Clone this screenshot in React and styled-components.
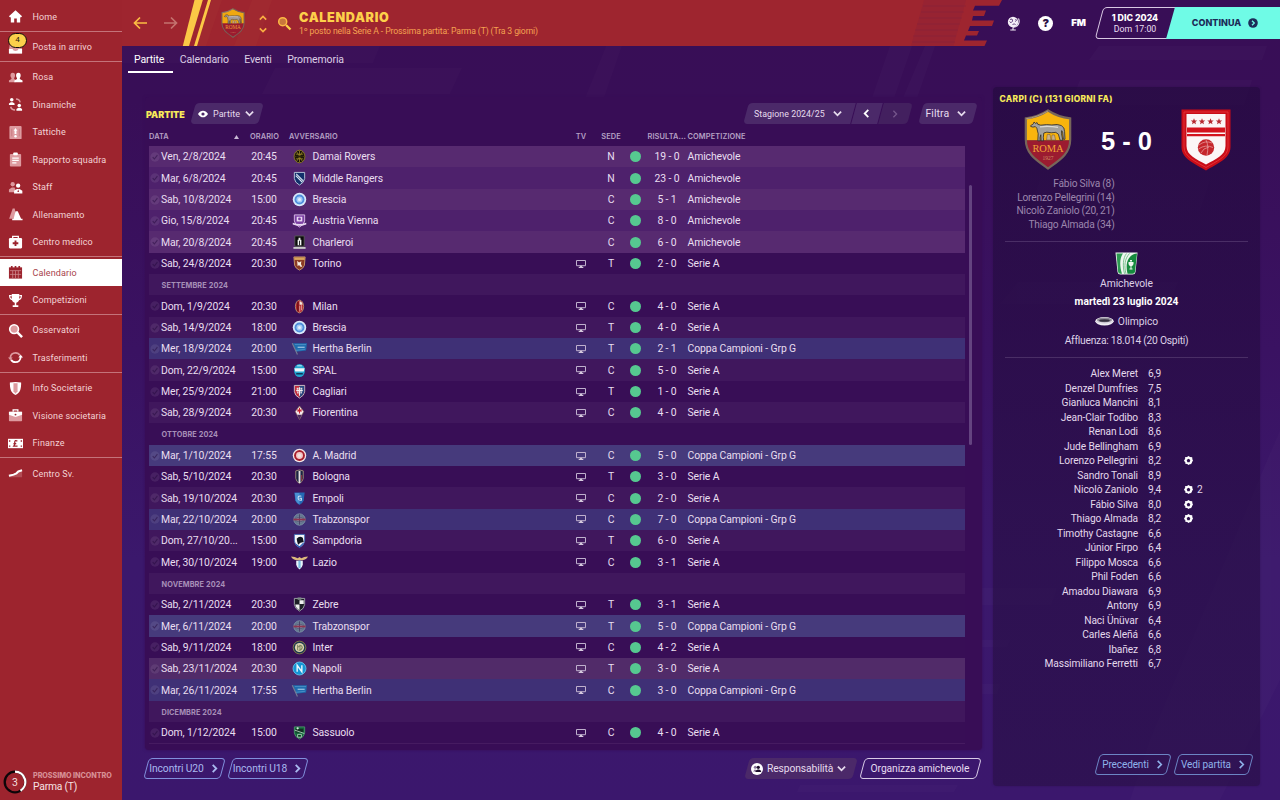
import React from 'react';
import styled, { createGlobalStyle, css } from 'styled-components';

const GlobalStyle = createGlobalStyle`
  * {
    box-sizing: border-box;
  }
  body {
    margin: 0;
    overflow: hidden;
    background: #380f57;
    font-family: Roboto, 'Liberation Sans', sans-serif;
    font-size: 10.5px;
    color: #e9dff0;
  }
  svg {
    display: block;
    flex: none;
  }
`;

const menu = [
  [{ icon: 'home', name: 'Home' }],
  [{ icon: 'inbox', name: 'Posta in arrivo', badge: 4 }],
  [
    { icon: 'squad', name: 'Rosa' },
    { icon: 'dynamics', name: 'Dinamiche' },
    { icon: 'tactics', name: 'Tattiche' },
    { icon: 'report', name: 'Rapporto squadra' },
    { icon: 'staff', name: 'Staff' },
    { icon: 'training', name: 'Allenamento' },
    { icon: 'medical', name: 'Centro medico' },
  ],
  [
    { icon: 'calendar', name: 'Calendario', active: true },
    { icon: 'trophy', name: 'Competizioni' },
  ],
  [
    { icon: 'scout', name: 'Osservatori' },
    { icon: 'transfer', name: 'Trasferimenti' },
  ],
  [
    { icon: 'shield', name: 'Info Societarie' },
    { icon: 'case', name: 'Visione societaria' },
    { icon: 'money', name: 'Finanze' },
  ],
  [{ icon: 'growth', name: 'Centro Sv.' }],
];

const A = 'Amichevole';
const S = 'Serie A';
const C = 'Coppa Campioni - Grp G';

// [date, time, crest, opponent, tv, venue, score, competition, row kind]
const matches = [
  ['Ven, 2/8/2024', '20:45', 'damai', 'Damai Rovers', 0, 'N', '19 - 0', A, 'friendly'],
  ['Mar, 6/8/2024', '20:45', 'middle', 'Middle Rangers', 0, 'N', '23 - 0', A, 'friendly'],
  ['Sab, 10/8/2024', '15:00', 'brescia', 'Brescia', 0, 'C', '5 - 1', A, 'friendly'],
  ['Gio, 15/8/2024', '20:45', 'austria', 'Austria Vienna', 0, 'C', '8 - 0', A, 'friendly'],
  ['Mar, 20/8/2024', '20:45', 'charleroi', 'Charleroi', 0, 'C', '6 - 0', A, 'friendly'],
  ['Sab, 24/8/2024', '20:30', 'torino', 'Torino', 1, 'T', '2 - 0', S, 'league'],
  'SETTEMBRE 2024',
  ['Dom, 1/9/2024', '20:30', 'milan', 'Milan', 1, 'C', '4 - 0', S, 'league'],
  ['Sab, 14/9/2024', '18:00', 'brescia', 'Brescia', 1, 'T', '4 - 0', S, 'league'],
  ['Mer, 18/9/2024', '20:00', 'hertha', 'Hertha Berlin', 1, 'T', '2 - 1', C, 'europe'],
  ['Dom, 22/9/2024', '15:00', 'spal', 'SPAL', 1, 'C', '5 - 0', S, 'league'],
  ['Mer, 25/9/2024', '21:00', 'cagliari', 'Cagliari', 1, 'T', '1 - 0', S, 'league'],
  ['Sab, 28/9/2024', '20:30', 'fiorentina', 'Fiorentina', 1, 'C', '4 - 0', S, 'league'],
  'OTTOBRE 2024',
  ['Mar, 1/10/2024', '17:55', 'madrid', 'A. Madrid', 1, 'C', '5 - 0', C, 'europe'],
  ['Sab, 5/10/2024', '20:30', 'bologna', 'Bologna', 1, 'T', '3 - 0', S, 'league'],
  ['Sab, 19/10/2024', '20:30', 'empoli', 'Empoli', 1, 'C', '2 - 0', S, 'league'],
  ['Mar, 22/10/2024', '20:00', 'trabzon', 'Trabzonspor', 1, 'C', '7 - 0', C, 'europe'],
  ['Dom, 27/10/20...', '15:00', 'sampdoria', 'Sampdoria', 1, 'T', '6 - 0', S, 'league'],
  ['Mer, 30/10/2024', '19:00', 'lazio', 'Lazio', 1, 'C', '3 - 1', S, 'league'],
  'NOVEMBRE 2024',
  ['Sab, 2/11/2024', '20:30', 'zebre', 'Zebre', 1, 'T', '3 - 1', S, 'league'],
  ['Mer, 6/11/2024', '20:00', 'trabzon', 'Trabzonspor', 1, 'T', '5 - 0', C, 'europe'],
  ['Sab, 9/11/2024', '18:00', 'inter', 'Inter', 1, 'C', '4 - 2', S, 'league'],
  ['Sab, 23/11/2024', '20:30', 'napoli', 'Napoli', 1, 'T', '3 - 0', S, 'derby'],
  ['Mar, 26/11/2024', '17:55', 'hertha', 'Hertha Berlin', 1, 'C', '3 - 0', C, 'europe'],
  'DICEMBRE 2024',
  ['Dom, 1/12/2024', '15:00', 'sassuolo', 'Sassuolo', 1, 'C', '4 - 0', S, 'league'],
];

const scorers = ['Fábio Silva (8)', 'Lorenzo Pellegrini (14)', 'Nicolò Zaniolo (20, 21)', 'Thiago Almada (34)'];

const players = [
  ['Alex Meret', '6,9'],
  ['Denzel Dumfries', '7,5'],
  ['Gianluca Mancini', '8,1'],
  ['Jean-Clair Todibo', '8,3'],
  ['Renan Lodi', '8,6'],
  ['Jude Bellingham', '6,9'],
  ['Lorenzo Pellegrini', '8,2', 1],
  ['Sandro Tonali', '8,9'],
  ['Nicolò Zaniolo', '9,4', 2],
  ['Fábio Silva', '8,0', 1],
  ['Thiago Almada', '8,2', 1],
  ['Timothy Castagne', '6,6'],
  ['Júnior Firpo', '6,4'],
  ['Filippo Mosca', '6,6'],
  ['Phil Foden', '6,6'],
  ['Amadou Diawara', '6,9'],
  ['Antony', '6,9'],
  ['Naci Ünüvar', '6,4'],
  ['Carles Aleñá', '6,6'],
  ['Ibañez', '6,8'],
  ['Massimiliano Ferretti', '6,7'],
];

/* ---------- icons ---------- */

const dim = '#dd9a9f';

const menuIcons = {
  home: <path d="M8 1.200 1 7.600l1.300 1.400.7-.6V14.500h3.600V10h2.800v4.500H13V8.400l.7.6L15 7.600z" fill="#fff" />,
  inbox: (
    <>
      <path d="M2 4h12l1 6v4.500H1V10z" fill={dim} />
      <path d="M1 9.500h3.800q.7 2.300 3.200 2.300t3.200-2.300H15v5H1z" fill="#fff" />
    </>
  ),
  squad: (
    <>
      <path d="M5 2.800c2 0 2.600 1.200 2.500 3 0 1.300-.4 2-.9 2.600v1.300l1.400.6V13H1v-1.800l2.700-1.500V8.400C3 7.800 2.600 7 2.600 5.800c0-1.800.7-3 2.400-3z" fill={dim} />
      <path d="M11 2.800c1.900 0 2.600 1.200 2.500 3 0 1.300-.4 2-.9 2.600v1.300l2.900 1.500V13H6.800v-1.800l2.800-1.500V8.400C9 7.800 8.600 7 8.600 5.800c0-1.800.7-3 2.400-3z" fill="#fff" />
    </>
  ),
  dynamics: (
    <>
      <circle cx="4" cy="3" r="1.900" fill="#fff" />
      <path d="M1 8.600V6.800L3 5.500h2l2 1.300v1.800z" fill="#fff" />
      <circle cx="12" cy="9" r="1.900" fill="#fff" />
      <path d="M9 14.600v-1.800l2-1.300h2l2 1.300v1.800z" fill="#fff" />
      <path d="M8.500 2.200c2.500 0 4 1.200 4.400 3.500M7.500 13.800c-2.300 0-4-1-4.600-3.400" fill="none" stroke={dim} strokeWidth="1.600" />
    </>
  ),
  tactics: (
    <>
      <rect x="1.500" y="1" width="13" height="14" rx="1" fill={dim} />
      <path d="M8 3.200 10 6H9v3.500H7V6H6z" fill="#fff" />
      <circle cx="8" cy="12" r="1.300" fill="#fff" />
      <path d="M4 4v8M12 4v8" stroke="#c87b82" />
    </>
  ),
  report: (
    <>
      <rect x="2" y="2" width="12" height="13.500" rx="1" fill={dim} />
      <rect x="5.500" y=".5" width="5" height="3" rx="1" fill="#fff" />
      <path d="M4.500 6.500h7M4.500 9h7M4.500 11.500h4.500" stroke="#fff" strokeWidth="1.300" />
    </>
  ),
  staff: (
    <>
      <circle cx="5" cy="4.500" r="2.300" fill={dim} />
      <path d="M1 13v-3l3-2h3l2 5z" fill={dim} />
      <circle cx="10.800" cy="6" r="2.300" fill="#fff" />
      <path d="M6.500 14.500v-3l3-2h2.800l3 2v3z" fill="#fff" />
      <path d="m10.900 9.800.9 3h-1.800z" fill="#9c242e" />
    </>
  ),
  training: (
    <>
      <path d="M5 1.500h2.200L9 12.500H1.200z" fill={dim} />
      <path d="M8 4.500h2.400L14 12.500h1.500V14h-11v-1.500H6z" fill="#fff" />
    </>
  ),
  medical: (
    <>
      <path d="M5 3.500V1.500h6v2" fill="none" stroke="#fff" strokeWidth="1.400" />
      <rect x="1" y="3.300" width="14" height="11" rx="1.200" fill="#fff" />
      <path d="M8 5.800v6M5 8.800h6" stroke="#9c242e" strokeWidth="2" />
    </>
  ),
  calendar: (
    <>
      <path d="M1 2.500h14V14.500H1z" fill="#9c242e" />
      <path d="M4 1v3.500M12 1v3.500M8 1v3" stroke="#9c242e" strokeWidth="1.800" />
      <path d="M2 6h12M2 10h12M5 6v8M8 6v8M11 6v8" stroke="#cf8c92" strokeWidth=".8" />
    </>
  ),
  trophy: (
    <>
      <path d="M4 1h8v5c0 2.300-1.600 4-3.200 4.300V13H11v2H5v-2h2.200v-2.700C5.600 10 4 8.300 4 6z" fill="#fff" />
      <path d="M4 2.700H1.700C1.700 5.500 3 6.800 4.600 7M12 2.700h2.300c0 2.800-1.300 4.100-2.900 4.300" fill="none" stroke="#fff" strokeWidth="1.300" />
    </>
  ),
  scout: (
    <>
      <path d="m10 10 5 5" stroke="#fff" strokeWidth="2.600" />
      <circle cx="6.500" cy="6.500" r="4.700" fill={dim} stroke="#fff" strokeWidth="1.700" />
    </>
  ),
  transfer: (
    <>
      <path d="M2.500 8.500C2.500 5 5 3 8 3c2.300 0 3.800 1 4.700 2.600" fill="none" stroke={dim} strokeWidth="1.900" />
      <path d="M13.500 7.500C13.500 11 11 13 8 13c-2.300 0-3.800-1-4.700-2.600" fill="none" stroke="#fff" strokeWidth="1.900" />
      <path d="M0 8h5L2.500 11z" fill={dim} />
      <path d="M11 8h5l-2.500-3z" fill="#fff" />
    </>
  ),
  shield: (
    <>
      <path d="M2 1.500q6-1 12 0c0 6-.5 10.500-6 13.500C2.500 12 2 7.500 2 1.500z" fill="#fff" />
      <path d="M5.800 2.500h4.400v8.500L8 13.500 5.800 11z" fill={dim} />
    </>
  ),
  case: (
    <>
      <path d="M5.500 4V2h5v2" fill="none" stroke="#fff" strokeWidth="1.400" />
      <rect x="1" y="4" width="14" height="10" rx=".8" fill={dim} />
      <path d="M1 4h14v3.300L8 9.500 1 7.300z" fill="#fff" />
      <circle cx="8" cy="7" r="1" fill="#9c242e" />
    </>
  ),
  money: (
    <>
      <path d="M0 3h16v10H0z" fill="#fff" />
      <path d="M10 5.500C8.500 4.300 7 5 7.200 6.800c.1 1.500.2 2.600-1 4h4M5.800 8.200h3" fill="none" stroke="#9c242e" strokeWidth="1.400" />
      <path d="M1 4.500h1.500v1.500H1zM13.500 4.500H15v1.500h-1.500zM1 10h1.500v1.500H1zM13.500 10H15v1.500h-1.500z" fill="#9c242e" />
    </>
  ),
  growth: (
    <>
      <path d="M1 12V9.500l4-.7L9 7l6-3v8z" fill={dim} opacity=".35" />
      <path d="M1 10.500 6 9.200 9 7.800l2-2 4-1.200" fill="none" stroke="#fff" strokeWidth="2.200" />
    </>
  ),
};

const MenuIcon = ({ name }) => (
  <svg width="15" height="15" viewBox="0 0 16 16">
    {menuIcons[name]}
  </svg>
);

const Chevron = ({ dir = 'down', size = 8, color = 'currentColor', width = 2 }) => {
  const d = {
    down: 'M1 3l4 4 4-4',
    up: 'M1 7l4-4 4 4',
    left: 'M7 1L3 5l4 4',
    right: 'M3 1l4 4-4 4',
  }[dir];
  return (
    <svg width={size} height={size} viewBox="0 0 10 10">
      <path d={d} fill="none" stroke={color} strokeWidth={width} />
    </svg>
  );
};

const Arrow = ({ flip, color }) => (
  <svg width="14" height="14" viewBox="0 0 14 14">
    <path
      d={flip ? 'M0 7h12.500M7 1.500 12.500 7 7 12.500' : 'M14 7H1.500M7 1.500 1.500 7 7 12.500'}
      fill="none"
      stroke={color}
      strokeWidth="1.700"
    />
  </svg>
);

const Eye = () => (
  <svg width="10" height="8" viewBox="0 0 10 8">
    <path d="M0 4C1.500 1.500 3.200.7 5 .7S8.500 1.500 10 4C8.500 6.500 6.800 7.300 5 7.300S1.500 6.500 0 4z" fill="#fff" />
    <circle cx="5" cy="4" r="1.600" fill="#4b2767" />
  </svg>
);

const Search = () => (
  <svg width="15" height="15" viewBox="0 0 15 15">
    <path d="m9 9 4.500 4.500" stroke="#fdd04a" strokeWidth="2.300" />
    <circle cx="5.700" cy="5.700" r="4" fill="#c9773c" stroke="#fdb944" strokeWidth="1.500" />
  </svg>
);

const Globe = () => (
  <svg width="13" height="15" viewBox="0 0 13 15">
    <circle cx="6" cy="6" r="5.200" fill="#f3edf6" />
    <path d="M3 3.500 5 3l.7 2L4 6.800 2.500 5.500M8.500 3l1 1.500-1.500 1M5.500 8.500l2-.7 1 1.200" fill="none" stroke="#5b3a78" strokeWidth=".9" />
    <path d="M11.500 2.500c1.800 4-.5 8.800-5.500 8.800M6 11.300v2.200M3.300 14h5.500" fill="none" stroke="#f3edf6" strokeWidth="1.100" />
  </svg>
);

const Tv = () => (
  <svg width="10" height="8" viewBox="0 0 10 8">
    <path d="M.5.500h9v5.200h-9z" fill="none" stroke="#bfb0cd" />
    <path d="M2.700 7.400h4.600M4 6.400h2" stroke="#d6cade" strokeWidth="1.100" />
  </svg>
);

const Check = () => (
  <svg width="10" height="10" viewBox="0 0 10 10">
    <circle cx="5" cy="5" r="4.700" fill="#fff" opacity=".08" />
    <path d="M2.700 5.200 4.400 7l3-3.800" fill="none" stroke="#22083c" strokeWidth="1.100" opacity=".5" />
  </svg>
);

const Ball = () => (
  <svg width="9" height="9" viewBox="0 0 9 9">
    <path d="M1 1.300 3 1l1.500-.9L6 1l2.200.3.2 2L9 4.700 8 6l-.3 2-2 .3-1.200.7L3.200 8 1.200 7.800.9 6 0 4.600.9 3.300z" fill="#fff" />
    <path d="m4.500 2.700 1.800 1.400-.7 2.100H3.400l-.7-2.100z" fill="#2d104d" />
    <path d="M0 2.500h1.200M7.500 7l1 1.500M.5 7.500l1.200-.7" stroke="#2d104d" strokeWidth=".7" />
  </svg>
);

const People = () => (
  <svg width="12" height="12" viewBox="0 0 12 12">
    <circle cx="6" cy="6" r="6" fill="#fff" />
    <circle cx="4.300" cy="4.300" r="1.500" fill="#8c7a9d" />
    <path d="M2 8.500 4 6.300l2 2.200z" fill="#8c7a9d" />
    <circle cx="7.300" cy="4.300" r="1.600" fill="#1d0d2c" />
    <path d="M4.500 9V7.800L6.600 6.500h1.500l2 1.300V9z" fill="#1d0d2c" />
  </svg>
);

const Stadium = () => (
  <svg width="19" height="10" viewBox="0 0 19 10">
    <ellipse cx="9.500" cy="5.200" rx="9.200" ry="4.200" fill="#f1eff4" />
    <ellipse cx="9.500" cy="4" rx="7.500" ry="2.600" fill="#8f8b98" />
    <ellipse cx="9.500" cy="4.500" rx="5.300" ry="1.300" fill="#34303e" />
    <path d="M1 5.500q8.500 3.500 17 0" fill="none" stroke="#c9c5d2" strokeWidth=".7" />
  </svg>
);

const CupLogo = () => (
  <svg width="23" height="23" viewBox="0 0 23 23">
    <path d="M.5.500h22L20.500 20q-.3 2.500-3 2.500h-12q-2.700 0-3-2.500z" fill="#eef6ef" />
    <path d="M22 1.500c-9 1-12 10-9.500 20.300h5q2.300 0 2.500-2z" fill="#158a3e" />
    <path d="M1.500 1.500h6.500C4.500 6 4.500 14 7 21.800H5.500q-2.200 0-2.400-2z" fill="#2d9a52" />
    <path d="M11.500 1.500C8 6 7.500 14 9.500 21.800M14.500 1.500C9.500 7 9 14 11 21.800" fill="none" stroke="#6fbb87" strokeWidth=".9" />
    <path d="M13.500 10h5v2q-.5 2-2 2.200v2.300h1v1h-3v-1h1v-2.300q-1.500-.2-2-2.200zM15 8h2v1.500h-2z" fill="#eef6ef" />
  </svg>
);

/* ---------- club crests ---------- */

const shieldPath = 'M2.500 1.500h11v6.500q-.5 4.500-5.500 7-5-2.500-5.500-7z';

const crests = {
  damai: (
    <>
      <ellipse cx="8" cy="8" rx="5.800" ry="6.700" fill="#151208" stroke="#8a7826" />
      <path d="M4 5.500h8M3 8h10M4 10.500h8M8 2v12M5 3l6 10M11 3 5 13" stroke="#a58f2a" strokeWidth=".8" />
      <path d="M3.500 7h9v2h-9z" fill="#2b2408" />
    </>
  ),
  middle: (
    <>
      <path d={shieldPath} fill="#12306b" stroke="#b9c8dc" />
      <path d="m4 5 7 7M4.500 3l7.500 7.500" stroke="#d9e4f2" strokeWidth="1.200" />
    </>
  ),
  brescia: (
    <>
      <circle cx="8" cy="8" r="7.200" fill="#d8e9fb" />
      <circle cx="8" cy="8" r="5.300" fill="#4f8fdc" />
      <circle cx="8" cy="8" r="3.300" fill="#a6ccf5" />
      <circle cx="8" cy="8" r="1.600" fill="#e3effc" />
    </>
  ),
  austria: (
    <>
      <path d="M2.500 2h11v6.500q-.5 4-5.500 6.500-5-2.500-5.500-6.500z" fill="#7a3fa2" stroke="#d9bde8" />
      <path d="M5 4h6v5H5z" fill="#e9d9f2" />
      <circle cx="8" cy="6.300" r="1.500" fill="#7a3fa2" />
      <path d="M.8 10.300q7.200 2.800 14.400 0v2q-7.200 2.800-14.400 0z" fill="#e9d9f2" />
    </>
  ),
  charleroi: (
    <>
      <path d="M3 1h10v11H3z" fill="#0c0c0c" stroke="#5b5b5b" />
      <path d="M6 5h4v6H6zM7 3h2v2H7z" fill="#f4f4f4" />
      <path d="M7.500 6h1v5h-1z" fill="#222" />
      <path d="M1.500 12.800h13v2h-13z" fill="#c9c9c9" />
    </>
  ),
  torino: (
    <>
      <path d="M2 1h12l-.8 9Q12 13.500 8 15 4 13.500 2.800 10z" fill="#8b3a24" stroke="#c79a6b" />
      <path d="M2.500 1.500h11v2.700h-11z" fill="#d8a45c" />
      <path d="m5.500 5 2 2 2.500-1.500-.5 3 1.500 3H9L7.500 9.500 6 11z" fill="#f6ede2" />
    </>
  ),
  milan: (
    <>
      <ellipse cx="8" cy="8" rx="4.400" ry="6.800" fill="#b31f26" stroke="#b9a37c" strokeWidth=".8" />
      <path d="M6.300 3v10" stroke="#3a0a10" strokeWidth=".9" />
      <path d="M8 2.500c2 .3 3 1.500 3.300 3.500H8z" fill="#efe6df" />
      <path d="M8.300 7v6.500M10.300 6.500v5.500" stroke="#efd0cb" strokeWidth=".8" />
    </>
  ),
  hertha: (
    <>
      <path d="M1 2.500h15L15 10 4.500 11.500z" fill="#1f6dae" />
      <path d="M3 3.800h12M3.500 10l10.500-1.200" stroke="#5a9fd0" strokeWidth=".7" />
      <path d="M6 6h7.500v1.500H6z" fill="#8fb9dc" />
      <path d="M.3 2.500 5.800 14.500" stroke="#767d95" strokeWidth="1.200" />
    </>
  ),
  spal: (
    <>
      <ellipse cx="8" cy="8" rx="5.800" ry="7" fill="#23a5cf" />
      <path d="M2.500 5.500h11l-1 3.500h-9z" fill="#f2f7fa" />
      <path d="M4.500 11.500h7" stroke="#0c2f52" strokeWidth="1.500" />
      <path d="M5.500 3h5" stroke="#d4eef7" />
    </>
  ),
  cagliari: (
    <>
      <path d={shieldPath} fill="#c32a3a" stroke="#ccc4cf" />
      <path d="M8 2h5v6q-.5 4-5 6.300z" fill="#27467e" />
      <path d="M8 3.500v9M4.500 7h7" stroke="#f2edf0" strokeWidth="1.200" />
      <path d="M5 4h2v2H5zM9 4h2v2H9zM5.500 8h1.500v2H5.500zM9 8h1.500v2H9z" fill="#e8dfe4" />
    </>
  ),
  fiorentina: (
    <>
      <path d="M8 1 12.500 7 8 15.500 3.500 7z" fill="#f5e9ee" stroke="#8d7654" strokeWidth=".6" />
      <path d="M8 3v6M5.500 6.500h5M6 4.500 8 7l2-2.500" stroke="#c6222f" strokeWidth="1.100" fill="none" />
      <path d="m5.500 10.500 2.500 5 2.500-5z" fill="#4d2a5e" />
    </>
  ),
  madrid: (
    <>
      <circle cx="8" cy="8" r="7.200" fill="#f3e4e6" />
      <circle cx="8" cy="8" r="5.800" fill="#a81d2c" />
      <circle cx="8" cy="8" r="3.700" fill="#f5c7c6" />
      <circle cx="8" cy="8" r="2" fill="#efe0e1" />
    </>
  ),
  bologna: (
    <>
      <path d="M4 2q4-2 8 0v8q-.5 3.500-4 5.500-3.500-2-4-5.500z" fill="#1b2443" stroke="#a5947c" strokeWidth=".9" />
      <path d="M10.300 6.500v6" stroke="#8f3340" strokeWidth="1.200" />
      <path d="M7 2v13h2V2z" fill="#e6e1e3" />
    </>
  ),
  empoli: (
    <>
      <path d="M2.500 1.500h11L12.500 10Q11 13.500 8 15 5 13.500 3.500 10z" fill="#2468b4" />
      <path d="M3 2h5v12Q5 12.500 4 10z" fill="#4a90d2" />
      <path d="M10 5.500q-3.500-.7-3.500 2t3.500 2.300V7.700H8" fill="none" stroke="#cfe3f5" strokeWidth="1.100" />
    </>
  ),
  trabzon: (
    <>
      <circle cx="8" cy="8" r="6" fill="#5c7089" stroke="#8095a8" />
      <path d="M5 4h6v8H5z" fill="#7f94a8" />
      <path d="M8 2.500v11M5 5.500h6M5 10.500h6" stroke="#4a4368" />
      <path d="M1.500 7h13v2h-13z" fill="#8f3350" />
    </>
  ),
  sampdoria: (
    <>
      <path d="M2.500 1.500h11v7q-.5 4.500-5.500 7-5-2.500-5.500-7z" fill="#f4f4f8" stroke="#2c61b5" strokeWidth=".8" />
      <path d="M5 6Q8 2.500 11.500 5l1 4.500-3.500 1-2.500 2L5.500 9z" fill="#111621" />
      <path d="m4 12 4 3 4-4" stroke="#2c61b5" strokeWidth="1.300" fill="none" />
    </>
  ),
  lazio: (
    <>
      <path d="M-1 1.500q4.500 0 7 2l2-1.500 2 1.500q2.500-2 7-2-1.500 3.500-6 4H5Q.5 5 -1 1.500z" fill="#dcb97c" />
      <path d="M4.500 6h7v4.500Q11 13.500 8 15.500q-3-2-3.500-5z" fill="#e9f4fb" />
      <path d="M6.800 6h2.400v8H6.800z" fill="#79bbdf" />
    </>
  ),
  zebre: (
    <>
      <path d={shieldPath} fill="#1d1f26" stroke="#9fa6a8" />
      <path d="M8 3.500h4.500v4H8zM3.500 8H8v6Q4 12 3.500 8z" fill="#eff0f0" />
      <path d="M6 .5h4v2.500H6z" fill="#7c8a86" />
    </>
  ),
  inter: (
    <>
      <circle cx="8" cy="8" r="6.800" fill="#1e3a52" stroke="#837a48" />
      <circle cx="8" cy="8" r="4.900" fill="#dcd4ae" />
      <path d="M6 5v6M8.500 5v6M6 8q4-4 5 0-1 3-4 3" fill="none" stroke="#7f8660" strokeWidth="1.100" />
    </>
  ),
  napoli: (
    <>
      <circle cx="8" cy="8" r="6.900" fill="#1495d3" stroke="#5cbce6" />
      <path d="M5.500 11.500v-7l5 7v-7" fill="none" stroke="#e8f6fd" strokeWidth="1.500" />
    </>
  ),
  sassuolo: (
    <>
      <path d="M2.500 2h11v6.500q-.5 4-5.500 6.500-5-2.500-5.500-6.500z" fill="#12693b" stroke="#4a8f68" />
      <path d="M4 4h8v4H4z" fill="#113022" />
      <path d="M3 5.500 13 9M6 10h4v3H6z" stroke="#b7d9c3" strokeWidth=".9" fill="#0b3a20" />
      <circle cx="6" cy="3.500" r="1.200" fill="#d9ebdf" />
    </>
  ),
};

const Crest = ({ club }) => (
  <svg width="15" height="15" viewBox="0 0 16 16" overflow="visible">
    {crests[club]}
  </svg>
);

const RomaCrest = ({ width, height, faded }) => (
  <svg width={width} height={height} viewBox="0 0 48 60" preserveAspectRatio="none" opacity={faded ? 0.92 : 1}>
    <defs>
      <clipPath id={`roma${width}`}>
        <path d="M24 1.500C17 6 9 8.500 1.800 9.300V30c0 14 10 20 22.200 28.500C36.200 50 46.200 44 46.200 30V9.300C39 8.500 31 6 24 1.500z" />
      </clipPath>
    </defs>
    <g clipPath={`url(#roma${width})`}>
      <path d="M0 0h48v31H0z" fill="#f8b40e" />
      <path d="M0 31h48v29H0z" fill="#9b1b30" />
    </g>
    <path d="M24 1.500C17 6 9 8.500 1.800 9.300V30c0 14 10 20 22.200 28.500C36.200 50 46.200 44 46.200 30V9.300C39 8.500 31 6 24 1.500z" fill="none" stroke="#77665a" strokeWidth="2.200" />
    <path d="M24 2C17 6 9 8.800 2.200 9.600" fill="none" stroke="#b7a693" strokeWidth=".8" />
    {/* the wolf: head and snout to the left, body, four legs, tail */}
    <path
      d="M6.500 16.500 9.500 14.500 10 12.800l1.700 1.500 1.300-1 .8 1.800 3 .8q6-1 11-.2 6-1.300 9.500.6 3.500 1.800 3.300 6l.4 7.500h-1.600l-.8-7-.9-1.500-.2 3 1.300 6.500h-2.700l-1.700-6-2.600-1.800q-4.500.8-9-.2l-3 .8-.5 4.200.3 3.500h-2.500l-.3-6-.8 3 .2 3h-2.400l.4-7-1.400-5.500-1.500-1.500-2.300.5-2.200-.6z"
      fill="#a3a29e"
      stroke="#2e2a27"
      strokeWidth=".8"
    />
    <path d="M16 17.500q9-1 18 .5" fill="none" stroke="#dcdbd6" strokeWidth="1.300" />
    <path d="M23.300 25h2.700l1 5.500h-4.500zM28 25.500h2.500l1 5h-4z" fill="#c9b08a" stroke="#6d532f" strokeWidth=".5" />
    <text x="24" y="42.300" textAnchor="middle" fontFamily="Liberation Serif, serif" fontSize="10.500" fill="#f2a436" textLength="31">
      ROMA
    </text>
    <text x="24" y="50.500" textAnchor="middle" fontFamily="Liberation Serif, serif" fontSize="5.500" fill="#cf8e62">
      1927
    </text>
  </svg>
);

const CarpiCrest = () => (
  <svg width="50" height="62" viewBox="0 0 50 62">
    <path d="M.5.500h49V38c0 12-14 17-24.500 23.500C14.500 55 .5 50 .5 38z" fill="#c90d18" />
    <path d="M3 3h44v35c0 10-12 14.500-22 20.500C15 52.500 3 48 3 38z" fill="none" stroke="#e8383c" strokeWidth=".8" />
    <path d="M5.500 5h39v32c0 9.500-10 13-19.500 18.500C15.500 50 5.500 46.500 5.500 37z" fill="#fbf6f6" />
    {[13, 21, 29.5, 38].map((x) => (
      <path key={x} transform={`translate(${x} 12.500)`} d="M0-3.200.9-1h2.300L1.400.5 2 2.800 0 1.500-2 2.800l.6-2.300L-3.200-1h2.300z" fill="#b62a30" />
    ))}
    <path d="M6 18.500h38v5H6zM6 25h38v2.300H6z" fill="#d3131d" />
    <circle cx="25" cy="38.500" r="8.200" fill="#c5262b" />
    <path d="M18 36q6-5 13-2M17.500 40q7-5 14.500-1.500M20 44q2-5 8-6M25 31q3 6 1 15" fill="none" stroke="#eaa5a5" strokeWidth=".7" />
  </svg>
);

/* ---------- backdrops ---------- */

const Backdrop = () => (
  <Backdrop.Svg width="1280" height="800" viewBox="0 0 1280 800">
    <g fill="#fff" opacity=".014">
      <path d="M275 68h187l-12 26H262zM122 46h258l-7 17H122zM606 46h16l-18 52h-19z" />
      <path d="M890 46h22l-18 52h-22zM925 46h10l-18 52h-14z" />
      <path d="M1099 46h168l-5 14H1089zM1080 80h172l-8 25H1070z" />
      <path d="M1040 180h170l-10 30H1030zM1018 282h160l-9 22H1000zM982 588h75l-6 17h-69z" />
      <path d="M982 640h28l-3 7h-25zM982 684h18l-3 10h-15zM800 785h158l-4 7H797z" />
      <path d="M1280 430v250l-60 120h-90l20-60z" />
    </g>
  </Backdrop.Svg>
);

Backdrop.Svg = styled.svg`
  position: absolute;
  inset: 0;
  z-index: -1;
`;

const HeaderArt = () => (
  <HeaderArt.Svg width="882" height="46" viewBox="122 0 882 46">
    <path
      d="M122 0h880l-3 5.700h-24l-2 4.800h13l-2 5.500h-11l-1 4.500h22l-2 5.500h-22l-2 5h11l-2 4.500h-11l-2 5h23l-2.500 5.500H122z"
      fill="#9e252f"
    />
    <path d="M924 0h42l-12.500 46H911z" fill="#7b1f40" opacity=".2" />
    <path d="M923 6h43M921 12h43M919 18h43M917 24h43M915 30h43M913 36h43M912 42h43" stroke="#6c1c42" opacity=".12" strokeWidth="2" />
    <path d="M212 0h10l-16 46h-10zM252 0h20l-16 46h-22z" fill="#b3473a" opacity=".12" />
    <path d="M194.500 0h8.300L189 46h-6.200z" fill="#fbc846" />
    <path d="M208 0h3l-14 46h-3z" fill="#fbc846" />
  </HeaderArt.Svg>
);

HeaderArt.Svg = styled.svg`
  position: absolute;
  left: 0;
  top: 0;
  z-index: -1;
`;

/* ---------- components ---------- */

const Sidebar = () => (
  <Sidebar.Wrapper>
    {menu.map((group) => (
      <Sidebar.Group key={group[0].name}>
        {group.map((item) => (
          <Sidebar.Item key={item.name} $active={item.active}>
            <Sidebar.Icon>
              <MenuIcon name={item.icon} />
              {item.badge && <Sidebar.Badge>{item.badge}</Sidebar.Badge>}
            </Sidebar.Icon>
            {item.name}
          </Sidebar.Item>
        ))}
      </Sidebar.Group>
    ))}
    <Sidebar.Next>
      <svg width="24" height="24" viewBox="0 0 24 24">
        <circle cx="12" cy="12" r="10.300" fill="none" stroke="#0d0508" strokeWidth="2.300" />
        <path d="M12 1.700a10.300 10.300 0 0 1 5.500 19" fill="none" stroke="#fff" strokeWidth="2.300" />
        <text x="12" y="15.800" textAnchor="middle" fontSize="10.500" fill="#f3dedf">3</text>
      </svg>
      <div>
        <Sidebar.NextLabel>PROSSIMO INCONTRO</Sidebar.NextLabel>
        <Sidebar.NextTeam>Parma (T)</Sidebar.NextTeam>
      </div>
    </Sidebar.Next>
  </Sidebar.Wrapper>
);

Sidebar.Wrapper = styled.nav`
  width: 122px;
  height: 800px;
  flex: none;
  display: flex;
  flex-direction: column;
  padding-top: 3px;
  background: #9d242e;
`;

Sidebar.Group = styled.ul`
  list-style: none;
  margin: 0;
  padding: 0;
  & + & {
    border-top: 1px solid #c4737a;
    padding-top: 1.8px;
  }
`;

Sidebar.Item = styled.li`
  height: 27.5px;
  display: flex;
  align-items: center;
  padding-left: 8px;
  gap: 9.5px;
  font-size: 9px;
  letter-spacing: 0.13px;
  color: ${({ $active }) => ($active ? '#a8434b' : '#f3d3d5')};
  background: ${({ $active }) => ($active ? '#fff' : 'transparent')};
`;

Sidebar.Icon = styled.span`
  position: relative;
`;

Sidebar.Badge = styled.span`
  position: absolute;
  left: 0;
  top: -7px;
  width: 19px;
  height: 15px;
  border: 1.5px solid #120b0b;
  border-radius: 8px;
  background: #fbd04b;
  color: #2f200c;
  font-size: 8px;
  line-height: 12px;
  text-align: center;
`;

Sidebar.Next = styled.div`
  margin-top: auto;
  height: 37px;
  display: flex;
  align-items: center;
  gap: 6px;
  padding-left: 3px;
`;

Sidebar.NextLabel = styled.div`
  font: 800 7.2px/11px Inter, sans-serif;
  letter-spacing: -0.05px;
  color: #d78f95;
  white-space: nowrap;
`;

Sidebar.NextTeam = styled.div`
  line-height: 12px;
  font-size: 10.3px;
  letter-spacing: -0.2px;
  color: #f6e3e4;
`;

const Header = () => (
  <Header.Wrapper>
    <HeaderArt />
    <Header.Nav>
      <Arrow color="#fbbd43" />
      <Arrow flip color="#c4736f" />
    </Header.Nav>
    <RomaCrest width={24} height={30} faded />
    <Header.Switch>
      <Chevron dir="up" color="#f9ae43" />
      <Chevron dir="down" color="#f9ae43" />
    </Header.Switch>
    <Search />
    <Header.Titles>
      <Header.Title>CALENDARIO</Header.Title>
      <Header.Subtitle>1º posto nella Serie A - Prossima partita: Parma (T) (Tra 3 giorni)</Header.Subtitle>
    </Header.Titles>
    <Header.Tools>
      <Globe />
      <Header.Help>?</Header.Help>
      <Header.Brand>FM</Header.Brand>
    </Header.Tools>
    <Header.Date>
      <b>1 DIC 2024</b>
      <span>Dom 17:00</span>
    </Header.Date>
    <Header.Continue>
      CONTINUA
      <svg width="10" height="10" viewBox="0 0 10 10">
        <circle cx="5" cy="5" r="4.800" fill="#1c2b58" />
        <path d="m4 2.700 2.300 2.300L4 7.300" fill="none" stroke="#6ffbe6" strokeWidth="1.300" />
      </svg>
    </Header.Continue>
  </Header.Wrapper>
);

Header.Wrapper = styled.header`
  position: relative;
  z-index: 0;
  height: 46px;
  flex: none;
  display: flex;
  align-items: center;
  padding-left: 11px;
`;

Header.Nav = styled.div`
  display: flex;
  gap: 17px;
  margin-right: 43px;
`;

Header.Switch = styled.div`
  display: flex;
  flex-direction: column;
  gap: 4px;
  margin: 2px 10px 0 14px;
`;

Header.Titles = styled.div`
  margin-left: 7px;
  padding-top: 1px;
  flex: 1;
`;

Header.Title = styled.h1`
  margin: 0;
  font: 900 12.6px/14px Inter, sans-serif;
  letter-spacing: 0.65px;
  color: #fdd04a;
`;

Header.Subtitle = styled.div`
  font-size: 8.7px;
  line-height: 12px;
  letter-spacing: -0.14px;
  color: #f5a251;
`;

Header.Tools = styled.div`
  display: flex;
  align-items: center;
  gap: 18px;
  margin-right: 10px;
`;

Header.Help = styled.span`
  width: 15px;
  height: 15px;
  border-radius: 50%;
  background: #fff;
  color: #2b1044;
  font: 900 11px/15px Inter, sans-serif;
  text-align: center;
`;

Header.Brand = styled.span`
  font: 900 9.6px/12px Inter, sans-serif;
  color: #fff;
`;

Header.Date = styled.div`
  position: relative;
  width: 70px;
  height: 32px;
  display: flex;
  flex-direction: column;
  align-items: center;
  justify-content: center;
  gap: 1px;
  padding-left: 8px;
  font-size: 8.8px;
  line-height: 10px;
  &::before {
    content: '';
    position: absolute;
    inset: 0 -8px 0 3px;
    border: 1.5px solid #d9c9e3;
    border-radius: 4px;
    transform: skewX(-15deg);
  }
  b {
    font: 800 8.8px/10px Inter, sans-serif;
    color: #fff;
  }
`;

Header.Continue = styled.button`
  position: relative;
  width: 114px;
  height: 32px;
  border: 0;
  display: flex;
  align-items: center;
  justify-content: center;
  gap: 7px;
  padding: 0 0 0 4px;
  background: #6ffbe6;
  clip-path: polygon(9px 0, 100% 0, 100% 100%, 0 100%);
  font: 800 9px/12px Inter, sans-serif;
  color: #1c2b58;
`;

const slanted = css`
  position: relative;
  z-index: 0;
  height: 21px;
  display: flex;
  align-items: center;
  &::before {
    content: '';
    position: absolute;
    z-index: -1;
    inset: 0 2.5px;
    border-radius: 4px;
    transform: skewX(-15deg);
  }
`;

const SoftButton = styled.button`
  ${slanted}
  width: ${({ $width }) => $width}px;
  justify-content: ${({ $center }) => ($center ? 'center' : 'flex-start')};
  gap: ${({ $gap = 6 }) => $gap}px;
  padding: 0 0 0 ${({ $left = 0 }) => $left}px;
  border: 0;
  background: none;
  font-family: inherit;
  font-size: ${({ $size = 9 }) => $size}px;
  letter-spacing: ${({ $spacing = 0.05 }) => $spacing}px;
  color: ${({ $faded }) => ($faded ? '#76568c' : '#e6dbed')};
  &::before {
    background: ${({ $faded }) => ($faded ? '#43205f' : '#4b2969')};
    border-radius: ${({ $radius = '4px' }) => $radius};
  }
`;

const OutlineButton = styled.button`
  ${slanted}
  width: ${({ $width }) => $width}px;
  justify-content: center;
  gap: 6px;
  padding: 0 0 1px;
  border: 0;
  background: none;
  font-family: inherit;
  font-size: ${({ $size = 10.3 }) => $size}px;
  letter-spacing: -0.1px;
  white-space: nowrap;
  color: ${({ $tone }) => $tone};
  &::before {
    border: 1.5px solid ${({ $line }) => $line};
  }
`;

const Tabs = () => (
  <Tabs.List>
    <Tabs.Item $active>Partite</Tabs.Item>
    <Tabs.Item>Calendario</Tabs.Item>
    <Tabs.Item>Eventi</Tabs.Item>
    <Tabs.Item>Promemoria</Tabs.Item>
  </Tabs.List>
);

Tabs.List = styled.div`
  display: flex;
  gap: 0.5px;
  height: 27px;
  padding-left: 6px;
`;

Tabs.Item = styled.a`
  padding: 0 9px 0 6px;
  line-height: 27px;
  letter-spacing: -0.12px;
  font-size: 10.5px;
  color: ${({ $active }) => ($active ? '#fff' : '#dccfe5')};
  border-bottom: 2px solid ${({ $active }) => ($active ? '#fff' : 'transparent')};
`;

const MatchRow = ({ match, index }) => {
  if (typeof match === 'string') {
    return (
      <MatchRow.Month $even={index % 2 === 0}>{match}</MatchRow.Month>
    );
  }
  const [date, time, crest, opponent, tv, venue, score, competition, kind] = match;
  return (
    <MatchRow.Item $even={index % 2 === 0} $kind={kind}>
      <Check />
      <span>{date}</span>
      <MatchRow.Center>{time}</MatchRow.Center>
      <MatchRow.Center><Crest club={crest} /></MatchRow.Center>
      <span>{opponent}</span>
      <MatchRow.Center>{tv ? <Tv /> : null}</MatchRow.Center>
      <MatchRow.Center>{venue}</MatchRow.Center>
      <MatchRow.Center><MatchRow.Dot /></MatchRow.Center>
      <MatchRow.Center>{score}</MatchRow.Center>
      <span>{competition}</span>
    </MatchRow.Item>
  );
};

const rowColors = {
  friendly: ['#572a70', '#4e216c'],
  league: ['#40175d', '#380e56'],
  europe: ['#463a7c', '#3f3076'],
  derby: ['#512b69', '#512b69'],
};

MatchRow.Item = styled.div`
  display: grid;
  grid-template-columns: 11px 80.5px 45px 26px 252px 33px 27px 22px 41px 1fr;
  align-items: center;
  height: 21.34px;
  padding: 0.5px 0 0 1px;
  font-size: 10.4px;
  letter-spacing: -0.1px;
  white-space: nowrap;
  background: ${({ $kind, $even }) => rowColors[$kind][$even ? 0 : 1]};
`;

MatchRow.Month = styled.div`
  height: 21.34px;
  padding-left: 12.5px;
  font: 700 7.3px/23px Inter, sans-serif;
  letter-spacing: 0.12px;
  color: #a78fb8;
  background: ${({ $even }) => rowColors.league[$even ? 0 : 1]};
`;

MatchRow.Center = styled.span`
  display: flex;
  justify-content: center;
`;

MatchRow.Dot = styled.i`
  width: 11px;
  height: 11px;
  border-radius: 50%;
  background: #56c890;
`;

const Fixtures = () => (
  <Fixtures.Panel>
    <Fixtures.Toolbar>
      <Fixtures.Title>PARTITE</Fixtures.Title>
      <SoftButton $width={73} $left={8} $gap={5}>
        <Eye />
        Partite
        <Chevron size={9} />
      </SoftButton>
      <Fixtures.Spacer />
      <SoftButton $width={112} $left={11} $gap={8} $size={8.8} $radius="4px 0 0 4px">
        Stagione 2024/25
        <Chevron size={9} />
      </SoftButton>
      <Fixtures.Joined>
        <SoftButton $width={31} $center $radius="0">
          <Chevron dir="left" size={9} color="#fff" />
        </SoftButton>
      </Fixtures.Joined>
      <Fixtures.Joined>
        <SoftButton $width={34} $center $faded $radius="0 4px 4px 0">
          <Chevron dir="right" size={8} width={1.6} />
        </SoftButton>
      </Fixtures.Joined>
      <Fixtures.Filter>
        <SoftButton $width={59} $left={7.5} $gap={8} $size={10.5}>
          Filtra
          <Chevron size={9} />
        </SoftButton>
      </Fixtures.Filter>
    </Fixtures.Toolbar>
    <Fixtures.Head>
      <Fixtures.DateHead>
        DATA
        <svg width="5" height="4" viewBox="0 0 5 4">
          <path d="M2.500 0 5 4H0z" fill="#c9b8d6" />
        </svg>
      </Fixtures.DateHead>
      <MatchRow.Center>ORARIO</MatchRow.Center>
      <Fixtures.WideHead>AVVERSARIO</Fixtures.WideHead>
      <MatchRow.Center>TV</MatchRow.Center>
      <MatchRow.Center>SEDE</MatchRow.Center>
      <span />
      <span>RISULTA...</span>
      <span>COMPETIZIONE</span>
    </Fixtures.Head>
    <Fixtures.Body>
      <Fixtures.Rows>
        {matches.map((match, index) => (
          <MatchRow key={index} match={match} index={index} />
        ))}
      </Fixtures.Rows>
      <Fixtures.Track>
        <Fixtures.Thumb />
      </Fixtures.Track>
    </Fixtures.Body>
  </Fixtures.Panel>
);

Fixtures.Panel = styled.section`
  margin: 24px 0 0 23px;
  width: 837px;
  height: 653px;
  padding: 6px 0 0 1px;
  border-radius: 4px;
  background: #380d56;
  box-shadow: 0 0 3px #380d56;
`;

Fixtures.Toolbar = styled.div`
  display: flex;
  height: 21px;
`;

Fixtures.Title = styled.h2`
  margin: 0;
  width: 44px;
  font: 900 9px/24px Inter, sans-serif;
  color: #f7ea5a;
`;

Fixtures.Spacer = styled.span`
  flex: 1;
`;

Fixtures.Joined = styled.span`
  margin-left: -4px;
`;

Fixtures.Filter = styled.span`
  margin: 0 5px 0 6px;
`;

Fixtures.Head = styled.div`
  display: grid;
  grid-template-columns: 99px 33px 7px 32px 244.5px 33px 27px 23px 40px 1fr;
  align-items: center;
  height: 22px;
  padding: 3px 0 0 3px;
  font: 600 7.4px/12px Inter, sans-serif;
  letter-spacing: 0.12px;
  color: #b5a0c4;
  white-space: nowrap;
`;

Fixtures.DateHead = styled.span`
  display: flex;
  align-items: center;
  justify-content: space-between;
  padding-right: 9px;
`;

Fixtures.WideHead = styled.span`
  grid-column: 4 / span 2;
  padding-left: 1px;
`;

Fixtures.Body = styled.div`
  display: flex;
  padding-left: 3px;
`;

Fixtures.Rows = styled.div`
  width: 816px;
  border-bottom: 1px solid #461b61;
`;

Fixtures.Track = styled.div`
  padding: 39px 0 0 4px;
`;

Fixtures.Thumb = styled.div`
  width: 3px;
  height: 260px;
  border-radius: 2px;
  background: #644380;
`;

const LastMatch = () => (
  <LastMatch.Panel>
    <LastMatch.Title>CARPI (C) (131 GIORNI FA)</LastMatch.Title>
    <LastMatch.Score>
      <RomaCrest width={48} height={61} />
      <strong>5 - 0</strong>
      <CarpiCrest />
    </LastMatch.Score>
    <LastMatch.Scorers>
      {scorers.map((name) => (
        <div key={name}>{name}</div>
      ))}
    </LastMatch.Scorers>
    <LastMatch.Info>
      <CupLogo />
      <LastMatch.Line $height={18}>Amichevole</LastMatch.Line>
      <LastMatch.Line $height={18} $bold>martedì 23 luglio 2024</LastMatch.Line>
      <LastMatch.Line $height={21}>
        <Stadium />
        Olimpico
      </LastMatch.Line>
      <LastMatch.Line $height={18} $tight>Affluenza: 18.014 (20 Ospiti)</LastMatch.Line>
    </LastMatch.Info>
    <LastMatch.Players>
      {players.map(([name, rating, goals]) => (
        <LastMatch.Player key={name}>
          <LastMatch.PlayerName>{name}</LastMatch.PlayerName>
          <span>{rating}</span>
          {goals && <Ball />}
          {goals > 1 && <span>{goals}</span>}
        </LastMatch.Player>
      ))}
    </LastMatch.Players>
    <LastMatch.Actions>
      <OutlineButton $width={77} $size={10} $tone="#8fb2ea" $line="#6c85c4">
        Precedenti
        <Chevron dir="right" size={9} width={1.8} />
      </OutlineButton>
      <OutlineButton $width={80} $size={10} $tone="#8fb2ea" $line="#6c85c4">
        Vedi partita
        <Chevron dir="right" size={9} width={1.8} />
      </OutlineButton>
    </LastMatch.Actions>
  </LastMatch.Panel>
);

LastMatch.Panel = styled.aside`
  width: 267px;
  height: 699px;
  margin: 41px 0 0 11px;
  flex: none;
  display: flex;
  flex-direction: column;
  border-radius: 4px;
  background: linear-gradient(#240a3fb0, #2a1049b0);
  box-shadow: 0 0 2px #2a0e4a80;
`;

LastMatch.Title = styled.h2`
  margin: 0;
  padding: 5px 0 0 6.5px;
  font: 800 8.4px/14px Inter, sans-serif;
  letter-spacing: 0.32px;
  color: #f7ea5a;
`;

LastMatch.Score = styled.div`
  display: flex;
  justify-content: space-between;
  margin: 3px 29px 0 31px;
  height: 62px;
  strong {
    font: 700 25.5px/64px 'Liberation Sans', sans-serif;
    color: #fff;
  }
`;

LastMatch.Scorers = styled.div`
  margin: 5px 12px 0;
  padding: 1px 133.5px 0 0;
  height: 66px;
  font-size: 10.2px;
  line-height: 13.7px;
  letter-spacing: -0.2px;
  text-align: right;
  color: #9c86ad;
  border-bottom: 1px solid #4a2e66;
`;

LastMatch.Info = styled.div`
  height: 116px;
  margin: 0 12px;
  padding-top: 9.5px;
  display: flex;
  flex-direction: column;
  align-items: center;
  border-bottom: 1px solid #4a2e66;
`;

LastMatch.Line = styled.div`
  display: flex;
  align-items: center;
  gap: 4px;
  height: ${({ $height }) => $height}px;
  font-size: ${({ $bold }) => ($bold ? 10.2 : 10.3)}px;
  font-weight: ${({ $bold }) => ($bold ? 700 : 400)};
  letter-spacing: ${({ $bold, $tight }) => ($bold ? 0 : $tight ? -0.25 : -0.05)}px;
  color: ${({ $bold }) => ($bold ? '#fff' : '#dcd0e6')};
`;

LastMatch.Players = styled.div`
  padding-top: 8.5px;
`;

LastMatch.Player = styled.div`
  display: grid;
  grid-template-columns: 145px 45.5px 13.5px 1fr;
  align-items: center;
  height: 14.5px;
  font-size: 10.2px;
  letter-spacing: -0.1px;
  color: #e4d9ec;
`;

LastMatch.PlayerName = styled.span`
  text-align: right;
  & + span {
    padding-left: 10px;
  }
`;

LastMatch.Actions = styled.div`
  display: flex;
  gap: 2px;
  justify-content: flex-end;
  margin: auto 6.5px 11px 0;
`;

const Footer = () => (
  <Footer.Bar>
    <OutlineButton $width={82} $tone="#a9b9ef" $line="#8190dc">
      Incontri U20
      <Chevron dir="right" size={9} />
    </OutlineButton>
    <OutlineButton $width={81} $tone="#a9b9ef" $line="#8190dc">
      Incontri U18
      <Chevron dir="right" size={9} />
    </OutlineButton>
    <Fixtures.Spacer />
    <SoftButton $width={113} $left={7} $gap={4} $size={10.3} $spacing={-0.1}>
      <People />
      Responsabilità
      <Chevron size={9} />
    </SoftButton>
    <OutlineButton $width={122} $tone="#e6dcf0" $line="#d8cbe6">Organizza amichevole</OutlineButton>
  </Footer.Bar>
);

Footer.Bar = styled.footer`
  display: flex;
  gap: 2px;
  width: 838px;
  margin: 8px 0 0 21px;
`;

export default function App() {
  return (
    <App.Page>
      <GlobalStyle />
      <Backdrop />
      <Sidebar />
      <App.Main>
        <Header />
        <App.Content>
          <App.Left>
            <Tabs />
            <Fixtures />
            <Footer />
          </App.Left>
          <LastMatch />
        </App.Content>
      </App.Main>
    </App.Page>
  );
}

App.Page = styled.div`
  position: relative;
  z-index: 0;
  display: flex;
  width: 1280px;
  height: 800px;
  overflow: hidden;
  background: linear-gradient(#380e56 0, #380e57 100px, #3a1262 350px, #3b186c 560px, #3b176d 100%);
`;

App.Main = styled.main`
  flex: 1;
  display: flex;
  flex-direction: column;
`;

App.Content = styled.div`
  display: flex;
`;

App.Left = styled.div`
  width: 860px;
`;
